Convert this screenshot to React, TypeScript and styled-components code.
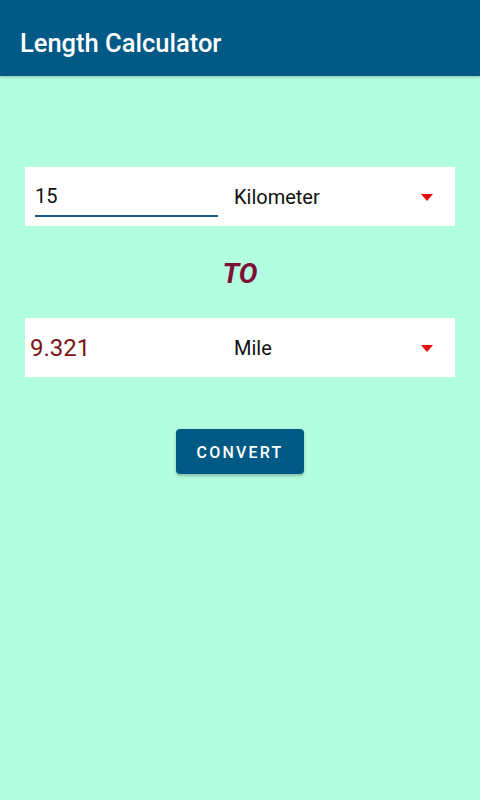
import React, { useState } from 'react';
import styled, { createGlobalStyle } from 'styled-components';

const GlobalStyle = createGlobalStyle`
  html, body {
    margin: 0;
    padding: 0;
    height: 100%;
  }
  body {
    font-family: Roboto, "Noto Sans", sans-serif;
    background: #b3fde1;
  }
  #root {
    min-height: 100%;
  }
`;

const Screen = styled.div`
  display: flex;
  flex-direction: column;
  width: 480px;
  min-height: 800px;
  background: #b3fde1;
`;

const AppBar = styled.header`
  display: flex;
  align-items: center;
  height: 76px;
  padding: 10px 20px 0;
  box-sizing: border-box;
  background: #015a86;
  color: #ffffff;
  font-size: 25.5px;
  font-weight: 500;
  box-shadow: 0 1px 3px rgba(0, 0, 0, 0.25);
`;

const Content = styled.main`
  display: flex;
  flex-direction: column;
  align-items: center;
  padding: 91px 25px 0;
`;

const Card = styled.div<{ $pad: number }>`
  display: flex;
  align-items: center;
  width: 100%;
  height: 59px;
  background: #ffffff;
  box-sizing: border-box;
  padding: 0 22px 0 ${(p) => p.$pad}px;
`;

const ValueField = styled.div`
  align-self: flex-end;
  width: 183px;
  height: 42px;
  margin: 0 16px 9px 0;
  display: flex;
  align-items: flex-end;
  padding-bottom: 7px;
  box-sizing: border-box;
  border-bottom: 2px solid #1b5e86;
  font-size: 20px;
  line-height: 24px;
  color: #111111;
`;

const Result = styled.div`
  width: 204px;
  font-size: 24px;
  color: #7a1414;
`;

const Unit = styled.div`
  flex: 1;
  font-size: 20px;
  color: #111111;
`;

const Caret = styled.span`
  width: 0;
  height: 0;
  border-left: 6px solid transparent;
  border-right: 6px solid transparent;
  border-top: 7px solid #e80d0d;
  margin-top: 1px;
`;

const ToLabel = styled.div`
  margin: 29px 0 25px;
  font-size: 28px;
  font-weight: 700;
  font-style: italic;
  color: #7d0f35;
  line-height: 38px;
`;

const ConvertButton = styled.button`
  margin-top: 52px;
  width: 128px;
  height: 45px;
  border: none;
  border-radius: 4px;
  background: #015a86;
  color: #ffffff;
  font-family: Roboto, sans-serif;
  font-size: 16px;
  font-weight: 500;
  letter-spacing: 2.2px;
  padding: 2px 0 0;
  box-shadow: 0 2px 3px rgba(0, 0, 0, 0.25);
  cursor: pointer;
`;

export default function App() {
  const [result] = useState('9.321');

  return (
    <Screen>
      <GlobalStyle />
      <AppBar>Length Calculator</AppBar>
      <Content>
        <Card $pad={10}>
          <ValueField>15</ValueField>
          <Unit>Kilometer</Unit>
          <Caret />
        </Card>
        <ToLabel>TO</ToLabel>
        <Card $pad={5}>
          <Result>{result}</Result>
          <Unit>Mile</Unit>
          <Caret />
        </Card>
        <ConvertButton>CONVERT</ConvertButton>
      </Content>
    </Screen>
  );
}
